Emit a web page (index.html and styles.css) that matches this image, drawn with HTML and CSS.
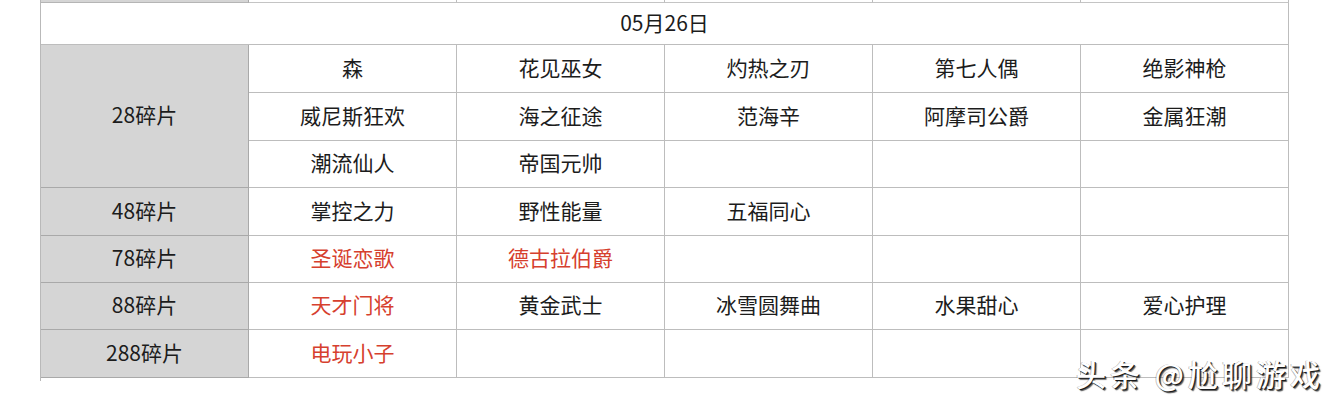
FILE: index.html
```html
<!DOCTYPE html>
<html lang="zh">
<head>
<meta charset="utf-8">
<title>05月26日</title>
<link rel="stylesheet" href="styles.css">
</head>
<body>
<div class="page">
  <div class="sheet">
    <div class="cell strip label"></div>
    <div class="cell strip"></div>
    <div class="cell strip"></div>
    <div class="cell strip"></div>
    <div class="cell strip"></div>
    <div class="cell strip"></div>

    <div class="cell head">05月26日</div>

    <div class="cell label span3">28碎片</div>
    <div class="cell">森</div>
    <div class="cell">花见巫女</div>
    <div class="cell">灼热之刃</div>
    <div class="cell">第七人偶</div>
    <div class="cell">绝影神枪</div>
    <div class="cell">威尼斯狂欢</div>
    <div class="cell">海之征途</div>
    <div class="cell">范海辛</div>
    <div class="cell">阿摩司公爵</div>
    <div class="cell">金属狂潮</div>
    <div class="cell">潮流仙人</div>
    <div class="cell">帝国元帅</div>
    <div class="cell"></div>
    <div class="cell"></div>
    <div class="cell"></div>

    <div class="cell label">48碎片</div>
    <div class="cell">掌控之力</div>
    <div class="cell">野性能量</div>
    <div class="cell">五福同心</div>
    <div class="cell"></div>
    <div class="cell"></div>

    <div class="cell label">78碎片</div>
    <div class="cell red">圣诞恋歌</div>
    <div class="cell red">德古拉伯爵</div>
    <div class="cell"></div>
    <div class="cell"></div>
    <div class="cell"></div>

    <div class="cell label">88碎片</div>
    <div class="cell red">天才门将</div>
    <div class="cell">黄金武士</div>
    <div class="cell">冰雪圆舞曲</div>
    <div class="cell">水果甜心</div>
    <div class="cell">爱心护理</div>

    <div class="cell label">288碎片</div>
    <div class="cell red">电玩小子</div>
    <div class="cell"></div>
    <div class="cell"></div>
    <div class="cell"></div>
    <div class="cell"></div>
  </div>
  <div class="watermark">头条 @尬聊游戏</div>
</div>
</body>
</html>
```

FILE: styles.css
```css
html, body {
  margin: 0;
  padding: 0;
  background: #ffffff;
}

body {
  font-family: "Noto Sans CJK SC", "Noto Sans", "Liberation Sans", sans-serif;
  color: #1c1c1c;
}

.page {
  position: relative;
  width: 1334px;
  height: 406px;
  overflow: hidden;
}

.sheet {
  margin-left: 40px;
  width: 1249px;
  box-sizing: border-box;
  border-left: 1px solid #b9b9b9;
  padding-bottom: 3px;
  display: grid;
  grid-template-columns: repeat(6, 208px);
  grid-template-rows: 3px 42px 48px 48px 47px 48px 47px 47px 48px;
}

.cell {
  box-sizing: border-box;
  border-right: 1px solid #bdbdbd;
  border-bottom: 1px solid #bdbdbd;
  display: flex;
  align-items: center;
  justify-content: center;
  padding-bottom: 3px;
  font-size: 21px;
  line-height: 1;
  background: #ffffff;
}

.strip {
  padding: 0;
  border-bottom-color: #c4c4c4;
}

.label {
  background: #d5d5d5;
  border-right-color: #a9a9a9;
  border-bottom-color: #a9a9a9;
}

.strip.label {
  border-bottom-color: #b5b5b5;
}

.head {
  grid-column: 1 / span 6;
  font-size: 21px;
}

.span3 {
  grid-row: span 3;
}

.red {
  color: #d6402e;
}

.watermark {
  position: absolute;
  left: 1076px;
  top: 358px;
  font-size: 30px;
  font-weight: 500;
  line-height: 1;
  letter-spacing: 4px;
  color: #ffffff;
  white-space: nowrap;
  text-shadow: 1px 1px 0 #1a1a1a, 2px 2px 1px rgba(0, 0, 0, 0.65), -1px 0 0 rgba(0,0,0,0.25);
}
```
